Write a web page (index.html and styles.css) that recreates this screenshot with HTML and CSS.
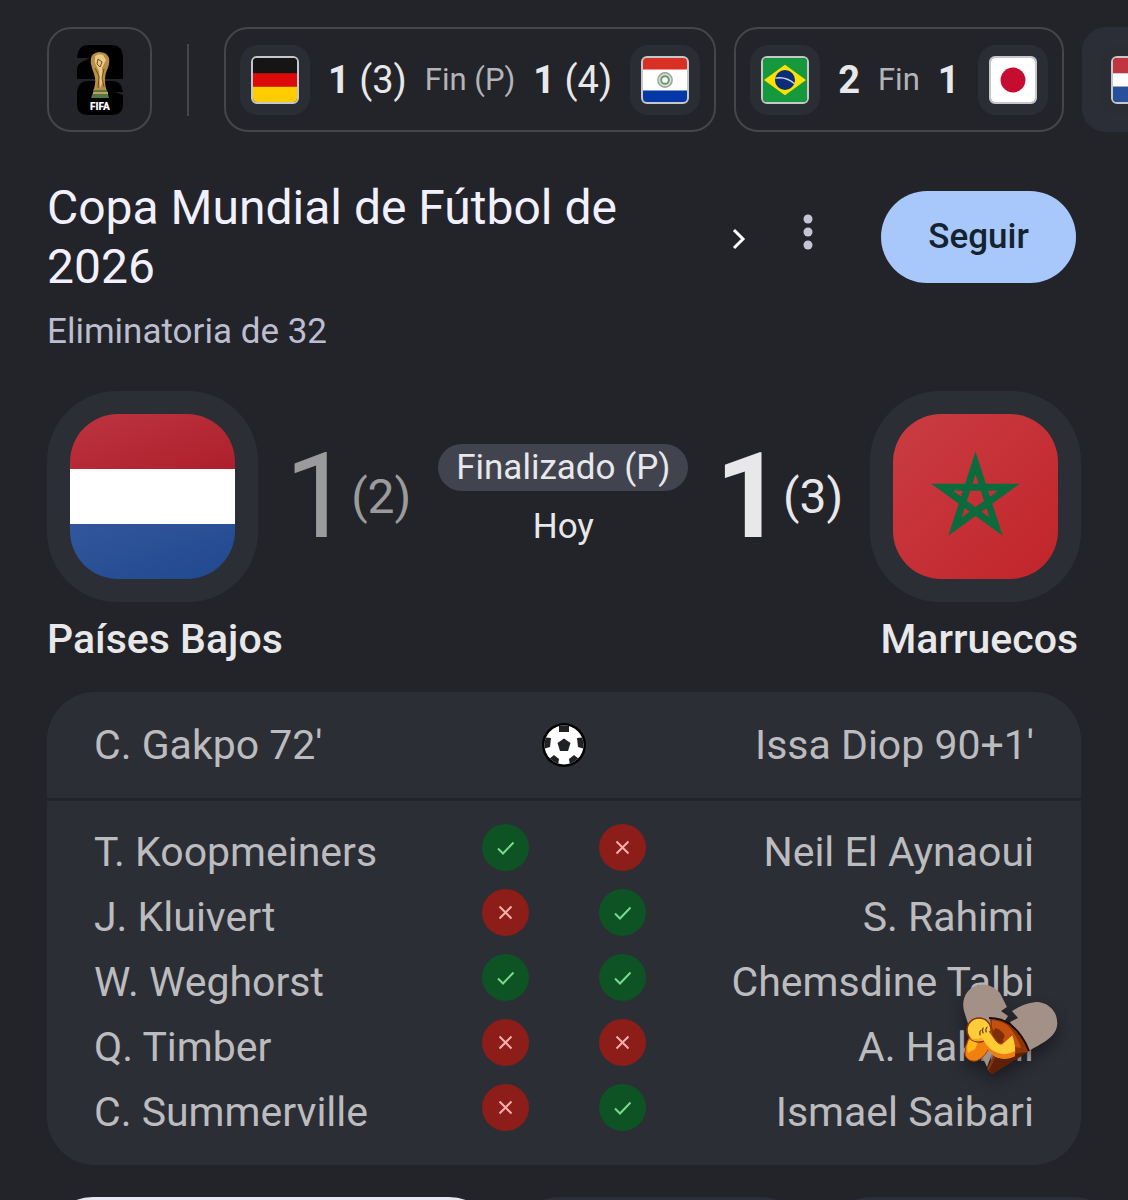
FILE: index.html
```html
<!DOCTYPE html>
<html lang="es">
<head>
  <meta charset="UTF-8" />
  <meta name="viewport" content="width=device-width, initial-scale=1" />
  <title>Países Bajos - Marruecos</title>
  <link rel="stylesheet" href="styles.css">
</head>
<body>
  <!-- shared icons -->
  <svg class="defs" aria-hidden="true">
    <symbol id="check" viewBox="0 0 47 47">
      <path d="M16 24.500l5 5L31.500 18.500" fill="none" stroke="#7bd88f" stroke-width="2" />
    </symbol>
    <symbol id="cross" viewBox="0 0 47 47">
      <path d="M17.500 17.500l12 12M29.500 17.500l-12 12" fill="none" stroke="#f7b0ab" stroke-width="2" />
    </symbol>
  </svg>

  <nav class="strip" aria-label="Partidos">
    <a class="chip logo" href="#" aria-label="FIFA">
      <svg width="48" height="72" viewBox="0 0 48 72">
        <path d="M12 1h24q10 0 11 11v23H1V26q0-6 5-8l8-4H1Q2 1 12 1z" fill="#000" />
        <path d="M12 37h24q10 0 11 11h-8l8 3v9q0 11-11 11H12Q1 71 1 60V48q1-11 11-11z" fill="#000" />
        <path d="M15 14q1-5 8-6 8 0 10 6 1 6-2 12-2 4-2 9 0 8 2 12H17q3-7 2-13-1-5-3-10-2-5-1-10z" fill="#b98d45" />
        <path d="M19 12q4-3 8-1l3 5-4 8 1 13-3 7-1-17-4-8z" fill="#e6c987" />
        <path d="M22 15l4 3-2 5-3-3zM28 25l-2 9 2 9M19 24l4 8-1 12" fill="none" stroke="#6f4d1c" />
        <path d="M18 46h13l2 8H15z" fill="#557746" />
        <path d="M17 49h15" stroke="#b3a35b" stroke-width="2" />
        <text x="24" y="66" class="fifa">FIFA</text>
      </svg>
    </a>
    <span class="divider"></span>

    <a class="chip" href="#">
      <span class="tile"><svg viewBox="0 0 46 46" role="img" aria-label="Alemania">
        <path fill="#151515" d="M0 0h46v16H0z" /><path fill="#dc0a0a" d="M0 16h46v14H0z" /><path fill="#fc0" d="M0 30h46v16H0z" />
      </svg></span>
      <span class="result"><b>1</b> (3)</span>
      <span class="state">Fin (P)</span>
      <span class="result"><b>1</b> (4)</span>
      <span class="tile"><svg viewBox="0 0 46 46" role="img" aria-label="Paraguay">
        <path fill="#fff" d="M0 0h46v46H0z" /><path fill="#d93025" d="M0 0h46v12H0z" /><path fill="#0438a6" d="M0 34h46v12H0z" />
        <circle cx="23" cy="23" r="7.500" fill="#ddd" stroke="#9a9f98" stroke-width="1.500" />
        <circle cx="23" cy="23" r="4" fill="#fff" stroke="#5f9f62" stroke-width="2" />
      </svg></span>
    </a>

    <a class="chip" href="#">
      <span class="tile"><svg viewBox="0 0 46 46" role="img" aria-label="Brasil">
        <path fill="#15993c" d="M0 0h46v46H0z" /><path fill="#fee100" d="M23 7l22 16-22 16L1 23z" />
        <circle cx="23" cy="23" r="10.500" fill="#0b2d78" />
        <path d="M13 21q11-2 20 6" fill="none" stroke="#c7d5e8" stroke-width="1.500" />
      </svg></span>
      <span class="result"><b>2</b></span>
      <span class="state">Fin</span>
      <span class="result"><b>1</b></span>
      <span class="tile"><svg viewBox="0 0 46 46" role="img" aria-label="Japón">
        <path fill="#fff" d="M0 0h46v46H0z" /><circle cx="23" cy="23" r="13" fill="#c60c30" />
      </svg></span>
    </a>

    <a class="chip current" href="#">
      <span class="tile"><svg viewBox="0 0 46 46" role="img" aria-label="Países Bajos">
        <path fill="#c03540" d="M0 0h46v16H0z" /><path fill="#fff" d="M0 16h46v14H0z" /><path fill="#27509b" d="M0 30h46v16H0z" />
      </svg></span>
    </a>
  </nav>

  <main class="match">
    <header class="head">
      <h1>Copa Mundial de Fútbol de 2026</h1>
      <button class="icon-btn arrow" aria-label="Abrir">
        <svg width="16" height="24" viewBox="0 0 16 24"><path d="M3 3l9 9-9 9" fill="none" stroke="#fff" stroke-width="3" /></svg>
      </button>
      <button class="icon-btn more" aria-label="Más opciones">
        <svg width="10" height="36" viewBox="0 0 10 36" fill="#c5c4d6"><circle cx="5" cy="5" r="4.500" /><circle cx="5" cy="18" r="4.500" /><circle cx="5" cy="31" r="4.500" /></svg>
      </button>
      <button class="follow">Seguir</button>
    </header>
    <p class="round">Eliminatoria de 32</p>

    <section class="score">
      <div class="crest">
        <svg viewBox="0 0 165 165" role="img" aria-label="Bandera de Países Bajos">
          <defs>
            <linearGradient id="red" x2="1" y2="1"><stop stop-color="#bd3440" /><stop offset="1" stop-color="#ad1f2b" /></linearGradient>
            <linearGradient id="blue" x2="1" y2="1"><stop stop-color="#32569b" /><stop offset="1" stop-color="#204990" /></linearGradient>
          </defs>
          <path fill="url(#red)" d="M0 0h165v55H0z" /><path fill="#fff" d="M0 55h165v55H0z" /><path fill="url(#blue)" d="M0 110h165v55H0z" />
        </svg>
      </div>
      <div class="points lost"><span class="goals">1</span><span class="pens">(2)</span></div>
      <div class="status">
        <span class="pill">Finalizado (P)</span>
        <span>Hoy</span>
      </div>
      <div class="points won"><span class="goals">1</span><span class="pens">(3)</span></div>
      <div class="crest">
        <svg viewBox="0 0 165 165" role="img" aria-label="Bandera de Marruecos">
          <defs>
            <linearGradient id="mar" x2="1" y2="1"><stop stop-color="#c93d43" /><stop offset="1" stop-color="#c1242a" /></linearGradient>
          </defs>
          <path fill="url(#mar)" d="M0 0h165v165H0z" />
          <path d="M82.500 49L103 112.500 49 73.200H116L62 112.500z" fill="none" stroke="#0b6b3c" stroke-width="7" />
        </svg>
      </div>
    </section>
    <div class="teams"><h2>Países Bajos</h2><h2>Marruecos</h2></div>

    <section class="panel goals-panel">
      <span>C. Gakpo 72'</span>
      <svg width="44" height="44" viewBox="0 0 44 44" role="img" aria-label="Goles">
        <defs><clipPath id="ball"><circle cx="22" cy="22" r="19.500" /></clipPath></defs>
        <circle cx="22" cy="22" r="22" fill="#000" />
        <circle cx="22" cy="22" r="19.500" fill="#fff" />
        <path clip-path="url(#ball)" fill="#202124" d="M22 15.500l6.500 4.500-2.500 8h-8l-2.500-8zM17 1h10v8H17zM0 14l9 1-1 9-7 2zM44 14l-9 1 1 9 7 2zM7 36l5-4 5 4-1 7H9zM37 36l-5-4-5 4 1 7h7z" />
      </svg>
      <span class="away">Issa Diop 90+1'</span>
    </section>

    <ul class="panel shootout">
      <li><span>T. Koopmeiners</span><svg class="mark in" role="img" aria-label="Gol"><use href="#check" /></svg><svg class="mark out" role="img" aria-label="Fallo"><use href="#cross" /></svg><span class="away">Neil El Aynaoui</span></li>
      <li><span>J. Kluivert</span><svg class="mark out" role="img" aria-label="Fallo"><use href="#cross" /></svg><svg class="mark in" role="img" aria-label="Gol"><use href="#check" /></svg><span class="away">S. Rahimi</span></li>
      <li><span>W. Weghorst</span><svg class="mark in" role="img" aria-label="Gol"><use href="#check" /></svg><svg class="mark in" role="img" aria-label="Gol"><use href="#check" /></svg><span class="away">Chemsdine Talbi</span></li>
      <li><span>Q. Timber</span><svg class="mark out" role="img" aria-label="Fallo"><use href="#cross" /></svg><svg class="mark out" role="img" aria-label="Fallo"><use href="#cross" /></svg><span class="away">A. Hakimi</span></li>
      <li><span>C. Summerville</span><svg class="mark out" role="img" aria-label="Fallo"><use href="#cross" /></svg><svg class="mark in" role="img" aria-label="Gol"><use href="#check" /></svg><span class="away">Ismael Saibari</span></li>
    </ul>
  </main>

  <div class="tabs">
    <button class="selected" aria-label="Resumen"></button>
    <button aria-label="Alineaciones"></button>
    <button aria-label="Estadísticas"></button>
  </div>

  <!-- floating reaction: broken heart with a facepalm -->
  <svg class="sticker" width="96" height="92" viewBox="0 0 96 92" aria-hidden="true">
    <!-- heart halves -->
    <path d="M38 9C32 2 25 0 17 1 5 3-1 15 2 27L8 46 25 83 42 38 46 32 39 27 45 23z" fill="#a39087" />
    <path d="M50 27Q62 19 74 18C88 18 97 30 95 42 93 54 80 59 67 67L48 38 56 34z" fill="#a39087" />
    <!-- body -->
    <path d="M28 35Q40 35 48 41 60 51 67 67L30 90 25 85 32 70z" fill="#8f3508" />
    <path d="M30 36Q42 37 48 44 56 54 59 64L46 62 30 44z" fill="#c4500f" />
    <path d="M33 44Q40 46 43 52L38 60 31 52z" fill="#7c2c07" />
    <path d="M27 34Q40 34 49 41 61 51 67 67" fill="none" stroke="#1d0e08" stroke-width="2" />
    <path d="M27 86L34 72 66 68 30 90z" fill="#5e2007" />
    <!-- far arm, head, near arm -->
    <path d="M7 54Q2 63 3 71 6 78 14 77 23 74 28 62L22 55z" fill="#f0800f" stroke="#a83b08" />
    <path d="M7 56Q4 63 6 69L13 65 16 58z" fill="#ffb91d" />
    <circle cx="17" cy="46" r="12" fill="#ffcd3c" stroke="#8e3105" stroke-width="1.500" />
    <path d="M7 53Q14 57 21 53L25 54Q20 58 13 57 9 56 7 53z" fill="#f7a823" />
    <path d="M19 52Q18 47 21 45 25 43 27 47L34 57Q37 61 40 60L50 51Q54 60 53 72 44 77 34 73 26 68 22 57z" fill="#ffcb35" />
    <path d="M22 57Q27 66 36 69 45 72 53 67L53 72Q44 77 34 73 26 68 22 57z" fill="#ee7c10" />
    <path d="M27 47L34 57Q37 61 40 60L50 51" fill="none" stroke="#b84a07" />
    <path d="M18 51q-1-4 1-5M21 49q-1-3 0-5M24 48q-1-3 1-5" fill="none" stroke="#3c1708" stroke-linecap="round" />
  </svg>
</body>
</html>
```

FILE: styles.css
```css
* {
  box-sizing: border-box;
}
body {
  margin: 0;
  height: 100vh;
  overflow: hidden;
  background: #232429;
  color: #e8e8ea;
  font-family: Roboto, 'Open Sans', sans-serif;
}
h1, h2, p, ul {
  margin: 0;
  padding: 0;
  font-weight: 400;
}
a {
  color: inherit;
  text-decoration: none;
}
button {
  border: none;
  padding: 0;
  background: none;
  font: inherit;
  cursor: pointer;
}
.defs {
  display: none;
}

/* top strip of matches */
.strip {
  display: flex;
  align-items: center;
  gap: 18px;
  padding: 27px 0 27px 47px;
  overflow: hidden;
}
.chip {
  flex: none;
  display: flex;
  align-items: center;
  height: 105px;
  padding: 0 14px;
  border: 2px solid #45464a;
  border-radius: 24px;
}
.logo {
  width: 105px;
  justify-content: center;
}
.fifa {
  font-size: 10px;
  font-weight: 900;
  fill: #fff;
  text-anchor: middle;
}
.divider {
  flex: none;
  width: 2px;
  height: 72px;
  margin: 0 17px;
  background: #45464a;
}
.tile {
  display: flex;
  align-items: center;
  justify-content: center;
  width: 70px;
  height: 70px;
  border-radius: 18px;
  background: #2b2d35;
}
.tile svg {
  width: 48px;
  height: 48px;
  border: 2px solid #c6c7ca;
  border-radius: 6px;
}
.result {
  margin-left: 18px;
  font-size: 38px;
}
.result + .tile {
  margin-left: 18px;
}
.state {
  margin-left: 18px;
  font-size: 31px;
  color: #b4b4b8;
}
.current {
  width: 200px;
  padding-left: 16px;
  border-color: #2b2e37;
  background: #2b2e37;
}

/* competition header */
.match {
  padding: 19px 47px 0;
}
.head {
  display: flex;
  align-items: center;
  height: 117px;
  padding-right: 5px;
}
.head h1 {
  flex: 1;
  padding-right: 70px;
  font-size: 48px;
  line-height: 59px;
  color: #f2f0ff;
}
.icon-btn {
  display: flex;
}
.arrow {
  padding-top: 5px;
}
.more {
  margin: 0 68px 0 56px;
  padding-bottom: 10px;
}
.follow {
  width: 195px;
  height: 92px;
  border-radius: 46px;
  background: #a8c7fa;
  color: #14232e;
  font-size: 35px;
  font-weight: 500;
}
.round {
  padding-top: 16px;
  font-size: 35px;
  line-height: 42px;
  color: #bdbdd0;
}

/* score */
.score {
  display: flex;
  align-items: center;
  justify-content: space-between;
  margin-top: 38px;
}
.crest {
  padding: 23px;
  border-radius: 70px;
  background: #2b2e35;
}
.crest svg {
  display: block;
  width: 165px;
  height: 165px;
  border-radius: 48px;
}
.points {
  display: flex;
  align-items: center;
}
.goals {
  font-size: 118px;
  line-height: 118px;
}
.pens {
  font-size: 48px;
}
.lost {
  color: #9b9b9b;
}
.won .goals {
  font-weight: 700;
}
.status {
  display: flex;
  flex-direction: column;
  align-items: center;
  gap: 12px;
  font-size: 35px;
  line-height: 47px;
}
.pill {
  padding: 0 18px;
  border-radius: 24px;
  background: #41444f;
}
.teams {
  display: flex;
  justify-content: space-between;
  padding: 12px 3px 0 0;
}
.teams h2 {
  font-size: 41px;
  font-weight: 500;
  line-height: 50px;
}

/* goals and penalties */
.panel {
  background: #2c2e36;
  color: #bcbcbe;
  font-size: 41px;
}
.goals-panel {
  display: grid;
  grid-template-columns: 1fr 44px 1fr;
  align-items: center;
  height: 106px;
  margin-top: 28px;
  padding: 0 47px;
  border-radius: 48px 48px 0 0;
}
.away {
  text-align: right;
}
.shootout {
  margin-top: 3px;
  padding: 23px 47px 16px;
  border-radius: 0 0 48px 48px;
  line-height: 57px;
  list-style: none;
}
.shootout li {
  display: grid;
  grid-template-columns: 1fr 47px 47px 1fr;
  column-gap: 70px;
  align-items: start;
  height: 65px;
}
.mark {
  width: 47px;
  height: 47px;
  border-radius: 50%;
}
.in {
  background: #0d5323;
}
.out {
  background: #8c1d18;
}

/* tabs below, cut off by the window edge */
.tabs {
  display: flex;
  gap: 18px;
  padding: 32px 8px 0 47px;
}
.tabs button {
  flex: 2;
  height: 92px;
  border-radius: 46px;
  background: #2c2e3c;
}
.tabs .selected {
  flex: 3;
  border: 3px solid #e8e6f5;
}
.sticker {
  position: absolute;
  right: 70px;
  top: 984px;
  filter: drop-shadow(0 8px 8px rgba(0, 0, 0, 0.4));
}
```
